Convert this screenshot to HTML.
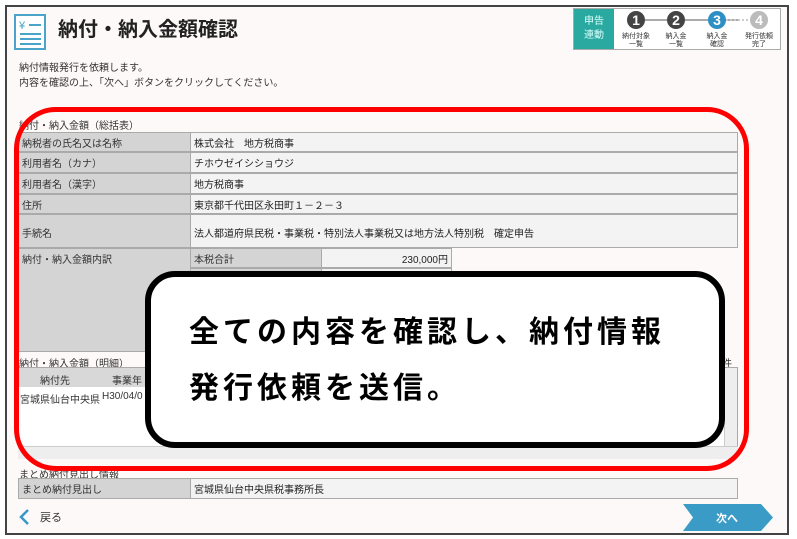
<!DOCTYPE html>
<html><head><meta charset="utf-8"><style>
body{margin:0;width:797px;height:539px;background:#fff;overflow:hidden;font-family:"Liberation Sans","Noto Sans CJK JP",sans-serif;position:relative}
.a{position:absolute;box-sizing:border-box}
.frame{left:5px;top:5px;width:784px;height:530px;border:2px solid #444;background:#fdf9f8}
.t{font-size:10px;color:#333;white-space:nowrap}
.lb{background:#d4d4d4;border:1px solid #aaa;font-size:10px;padding:2px 3px;color:#333;white-space:nowrap}
.vl{background:#f3f3f3;border:1px solid #aaa;font-size:10px;padding:2px 3px;color:#222;white-space:nowrap}
</style></head><body>
<div class="a frame"></div>
<svg class="a" style="left:13px;top:12px" width="36" height="40" viewBox="0 0 36 40">
<rect x="2" y="3" width="30" height="34" fill="#fff" stroke="#4aa3c8" stroke-width="2"/>
<text x="6" y="17" font-size="11" fill="#4aa3c8" font-family="Liberation Sans">¥</text>
<line x1="16" y1="13" x2="28" y2="13" stroke="#4aa3c8" stroke-width="2"/>
<line x1="7" y1="22" x2="28" y2="22" stroke="#4aa3c8" stroke-width="2"/>
<line x1="7" y1="27" x2="28" y2="27" stroke="#4aa3c8" stroke-width="2"/>
<line x1="7" y1="32" x2="28" y2="32" stroke="#4aa3c8" stroke-width="2"/>
</svg>
<div class="a" style="left:58px;top:13px;font-size:20px;font-weight:bold;color:#222">納付・納入金額確認</div>
<div class="a" style="left:573px;top:8px;width:208px;height:42px;border:1px solid #aaa;background:#fff"></div>
<div class="a" style="left:574px;top:9px;width:40px;height:40px;background:#2aa9a0;color:#dff;font-size:10px;text-align:center;line-height:14px;padding-top:6px">申告<br>連動</div>
<svg class="a" style="left:614px;top:9px" width="166" height="40">
<line x1="22" y1="11" x2="125" y2="11" stroke="#555" stroke-width="1"/>
<line x1="100" y1="11" x2="145" y2="11" stroke="#999" stroke-dasharray="2 2"/>
<circle cx="22" cy="11" r="9" fill="#444"/><text x="22" y="16" font-size="14" fill="#fff" text-anchor="middle" font-weight="bold">1</text>
<circle cx="62" cy="11" r="9" fill="#444"/><text x="62" y="16" font-size="14" fill="#fff" text-anchor="middle" font-weight="bold">2</text>
<circle cx="103" cy="11" r="9" fill="#2e8fc4"/><text x="103" y="16" font-size="14" fill="#fff" text-anchor="middle" font-weight="bold">3</text>
<circle cx="145" cy="11" r="9" fill="#bbb"/><text x="145" y="16" font-size="14" fill="#fff" text-anchor="middle" font-weight="bold">4</text>
<g font-size="7" fill="#333" text-anchor="middle"><text x="22" y="29">納付対象</text><text x="22" y="37">一覧</text>
<text x="62" y="29">納入金</text><text x="62" y="37">一覧</text>
<text x="103" y="29">納入金</text><text x="103" y="37">確認</text>
<text x="145" y="29">発行依頼</text><text x="145" y="37">完了</text></g>
</svg>
<div class="a t" style="left:19px;top:59px">納付情報発行を依頼します。</div>
<div class="a t" style="left:19px;top:74px">内容を確認の上、「次へ」ボタンをクリックしてください。</div>
<div class="a t" style="left:19px;top:117px">納付・納入金額（総括表）</div>
<div class="a lb" style="left:18px;top:132px;width:173px;height:20px">納税者の氏名又は名称</div><div class="a vl" style="left:190px;top:132px;width:548px;height:20px">株式会社　地方税商事</div>
<div class="a lb" style="left:18px;top:152px;width:173px;height:21px">利用者名（カナ）</div><div class="a vl" style="left:190px;top:152px;width:548px;height:21px">チホウゼイシショウジ</div>
<div class="a lb" style="left:18px;top:173px;width:173px;height:21px">利用者名（漢字）</div><div class="a vl" style="left:190px;top:173px;width:548px;height:21px">地方税商事</div>
<div class="a lb" style="left:18px;top:194px;width:173px;height:20px">住所</div><div class="a vl" style="left:190px;top:194px;width:548px;height:20px">東京都千代田区永田町１－２－３</div>
<div class="a lb" style="left:18px;top:214px;width:173px;height:34px;padding-top:10px">手続名</div><div class="a vl" style="left:190px;top:214px;width:548px;height:34px;padding-top:10px">法人都道府県民税・事業税・特別法人事業税又は地方法人特別税　確定申告</div>
<div class="a lb" style="left:18px;top:248px;width:173px;height:104px">納付・納入金額内訳</div>
<div class="a lb" style="left:190px;top:248px;width:132px;height:20px">本税合計</div><div class="a vl" style="left:321px;top:248px;width:131px;height:20px;text-align:right">230,000円</div>
<div class="a lb" style="left:190px;top:268px;width:132px;height:20px"></div><div class="a vl" style="left:321px;top:268px;width:131px;height:20px"></div>
<div class="a t" style="left:19px;top:355px">納付・納入金額（明細）</div>
<div class="a t" style="left:722px;top:355px">件</div>
<div class="a" style="left:18px;top:367px;width:720px;height:92px;border:1px solid #aaa;background:#fff"></div>
<div class="a" style="left:19px;top:368px;width:705px;height:19px;background:#d8d8d8"></div>
<div class="a t" style="left:40px;top:372px">納付先</div><div class="a t" style="left:112px;top:372px">事業年</div>
<div class="a t" style="left:20px;top:391px">宮城県仙台中央県</div><div class="a t" style="left:102px;top:391px">H30/04/0</div>
<div class="a" style="left:724px;top:368px;width:13px;height:90px;background:#eee;border-left:1px solid #ccc"></div>
<div class="a" style="left:18px;top:446px;width:720px;height:13px;background:#eee;border-top:1px solid #ccc"></div>
<div class="a t" style="left:19px;top:466px">まとめ納付見出し情報</div>
<div class="a lb" style="left:18px;top:478px;width:173px;height:21px">まとめ納付見出し</div><div class="a vl" style="left:190px;top:478px;width:548px;height:21px">宮城県仙台中央県税事務所長</div>
<svg class="a" style="left:18px;top:508px" width="14" height="18"><path d="M10 2 L3 9 L10 16" fill="none" stroke="#3a96c8" stroke-width="2.5"/></svg>
<div class="a" style="left:40px;top:509px;font-size:11px;color:#333">戻る</div>
<svg class="a" style="left:683px;top:504px" width="90" height="27"><path d="M0 0 H78 L90 13.5 L78 27 H0 L10 13.5 Z" fill="#3a9cc6"/><text x="44" y="18" font-size="11" fill="#fff" text-anchor="middle" font-weight="bold" font-family="Liberation Sans,Noto Sans CJK JP">次へ</text></svg>
<div class="a" style="left:14px;top:107px;width:735px;height:364px;border:5px solid #f00;border-radius:42px"></div>
<div class="a" style="left:145px;top:271px;width:580px;height:177px;border:6px solid #000;border-radius:30px;background:#fff"></div>
<div class="a" style="left:189px;top:305px;font-size:30px;font-weight:bold;color:#000;letter-spacing:4px;line-height:56px;white-space:nowrap">全ての内容を確認し、納付情報<br>発行依頼を送信。</div>
</body></html>
